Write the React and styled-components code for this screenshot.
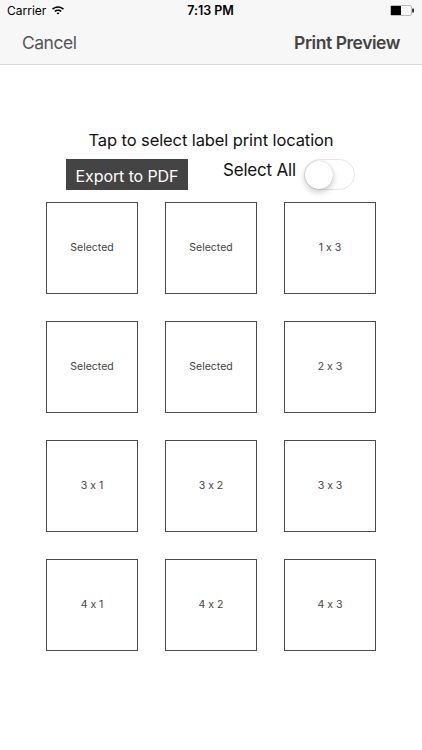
import React from "react";
import styled, { createGlobalStyle } from "styled-components";

const Global = createGlobalStyle`
  html, body { margin: 0; padding: 0; background: #fff; }
  body {
    font-family: Inter, "Noto Sans", sans-serif;
    -webkit-font-smoothing: antialiased;
    font-feature-settings: "calt" 0;
  }
`;

const Page = styled.div`
  width: 422px;
  height: 750px;
  background: #fff;
  display: flex;
  flex-direction: column;
`;

const TopBar = styled.div`
  background: #f7f7f7;
  border-bottom: 1px solid #d6d6d6;
`;

const StatusBar = styled.div`
  height: 20px;
  display: grid;
  grid-template-columns: 1fr auto 1fr;
  align-items: center;
  padding: 0 8px 0 7px;
  font-size: 12px;
  color: #000;
`;

const StatusLeft = styled.div`
  display: flex;
  align-items: center;
  gap: 5px;
`;

const StatusTime = styled.div`
  font-weight: 600;
  font-size: 12.5px;
`;

const StatusRight = styled.div`
  display: flex;
  justify-content: flex-end;
  align-items: center;
`;

const NavBar = styled.div`
  height: 44px;
  display: flex;
  align-items: center;
  justify-content: space-between;
  padding: 0 22px 0 22px;
`;

const NavButton = styled.span`
  font-size: 17.5px;
  color: ${(p) => (p.$bold ? "#444" : "#555")};
  font-weight: ${(p) => (p.$bold ? 600 : 400)};
  letter-spacing: ${(p) => (p.$bold ? "-0.45px" : "-0.5px")};
`;

const Content = styled.div`
  display: flex;
  flex-direction: column;
  align-items: center;
  padding-top: 64px;
`;

const Title = styled.div`
  font-size: 16.5px;
  color: #111;
  height: 22px;
  line-height: 22px;
  letter-spacing: -0.1px;
`;

const Controls = styled.div`
  width: 330px;
  display: flex;
  align-items: flex-start;
  margin-top: 8px;
  height: 43px;
`;

const ExportButton = styled.button`
  margin-left: 20px;
  width: 122px;
  height: 31px;
  background: #444;
  color: #fff;
  border: none;
  font-family: inherit;
  font-feature-settings: "calt" 0;
  font-size: 16px;
  letter-spacing: -0.1px;
  padding: 0;
  padding-top: 3px;
  cursor: pointer;
`;

const SelectAll = styled.div`
  display: flex;
  align-items: flex-start;
  margin-left: 35px;
  gap: 8px;
`;

const SelectLabel = styled.span`
  font-size: 17px;
  color: #111;
  line-height: 22px;
  letter-spacing: -0.2px;
`;

const Switch = styled.div`
  width: 51px;
  height: 31px;
  border-radius: 16px;
  box-sizing: border-box;
  border: 1.5px solid #e5e5e5;
  background: #fff;
  display: flex;
  align-items: center;
`;

const Knob = styled.div`
  width: 28px;
  height: 28px;
  border-radius: 50%;
  background: #fff;
  box-shadow: 0 3px 6px rgba(0, 0, 0, 0.22), 0 0 1px rgba(0, 0, 0, 0.25);
`;

const Grid = styled.div`
  display: grid;
  grid-template-columns: repeat(3, 92px);
  grid-auto-rows: 92px;
  gap: 27px;
`;

const Cell = styled.div`
  box-sizing: border-box;
  border: 1px solid #4a4a4a;
  display: flex;
  align-items: center;
  justify-content: center;
  font-size: 10.5px;
  color: #444;
  padding-bottom: 1px;
`;

const cells = [
  "Selected", "Selected", "1 x 3",
  "Selected", "Selected", "2 x 3",
  "3 x 1", "3 x 2", "3 x 3",
  "4 x 1", "4 x 2", "4 x 3",
];

const Wifi = () => (
  <svg width="14" height="10" viewBox="0 0 14 10">
    <path d="M7 1.2c2.3 0 4.4.9 6 2.4l-1.1 1.1C10.6 3.5 8.9 2.7 7 2.7S3.4 3.5 2.1 4.7L1 3.6c1.6-1.5 3.7-2.4 6-2.4z" fill="#000" />
    <path d="M7 4.4c1.4 0 2.7.5 3.7 1.4L9.6 6.9C8.9 6.3 8 5.9 7 5.9s-1.9.4-2.6 1L3.3 5.8c1-.9 2.3-1.4 3.7-1.4z" fill="#000" />
    <path d="M7 7.5c.6 0 1.1.2 1.5.6L7 9.6 5.5 8.1c.4-.4.9-.6 1.5-.6z" fill="#000" />
  </svg>
);

const Battery = () => (
  <svg width="24" height="11" viewBox="0 0 24 11">
    <rect x="0.5" y="0.5" width="21" height="10" rx="1.5" fill="none" stroke="#bbb" />
    <rect x="1" y="1" width="10" height="9" fill="#000" />
    <rect x="22.3" y="3.5" width="1.5" height="4" rx="0.5" fill="#000" />
  </svg>
);

export default function App() {
  return (
    <Page>
      <Global />
      <TopBar>
        <StatusBar>
          <StatusLeft>
            <span>Carrier</span>
            <Wifi />
          </StatusLeft>
          <StatusTime>7:13 PM</StatusTime>
          <StatusRight>
            <Battery />
          </StatusRight>
        </StatusBar>
        <NavBar>
          <NavButton>Cancel</NavButton>
          <NavButton $bold>Print Preview</NavButton>
        </NavBar>
      </TopBar>
      <Content>
        <Title>Tap to select label print location</Title>
        <Controls>
          <ExportButton>Export to PDF</ExportButton>
          <SelectAll>
            <SelectLabel>Select All</SelectLabel>
            <Switch>
              <Knob />
            </Switch>
          </SelectAll>
        </Controls>
        <Grid>
          {cells.map((c, i) => (
            <Cell key={i}>{c}</Cell>
          ))}
        </Grid>
      </Content>
    </Page>
  );
}
